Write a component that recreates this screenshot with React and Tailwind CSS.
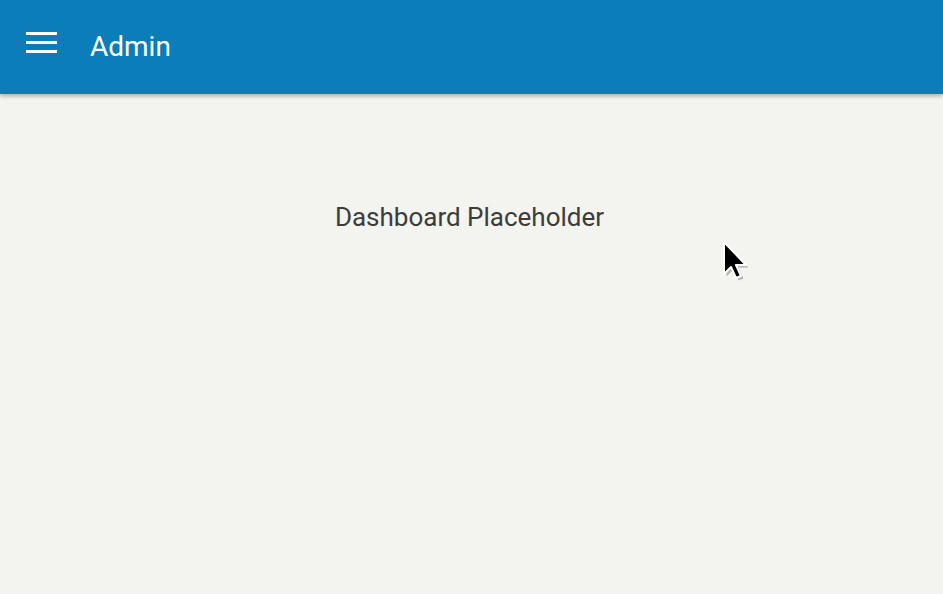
export default function App() {
  return (
    <div className="relative min-h-screen h-[594px] bg-[#f3f3ef] font-['Roboto',sans-serif] overflow-hidden">
      <header className="h-[94px] bg-[#0b7db8] flex items-start shadow-[0_2px_4px_rgba(0,0,0,0.3)] relative z-10">
        <button className="ml-[26px] mt-[32px] w-[31px] flex flex-col gap-[6px]">
          <span className="block h-[3px] bg-white"></span>
          <span className="block h-[3px] bg-white"></span>
          <span className="block h-[3px] bg-white"></span>
        </button>
        <h1 className="ml-[33px] mt-[29px] text-[28px] leading-[36px] text-white">Admin</h1>
      </header>
      <main className="pt-[104px] pr-[4px] text-center">
        <p className="text-[26px] text-[#3c3c3a] leading-[38px]">Dashboard Placeholder</p>
      </main>
      <svg className="absolute left-[721px] top-[240px]" width="30" height="42" viewBox="0 0 30 42">
        <path d="M4 3 L4 35 L11 28 L16 39 L21 37 L16 26 L26 26 Z" fill="rgba(0,0,0,0.25)" transform="translate(1.5 1.5)" />
        <path d="M3 2 L3 34 L10 27 L15 38 L20 36 L15 25 L25 25 Z" fill="#000" stroke="#fff" strokeWidth="2" strokeLinejoin="round" />
      </svg>
    </div>
  );
}
